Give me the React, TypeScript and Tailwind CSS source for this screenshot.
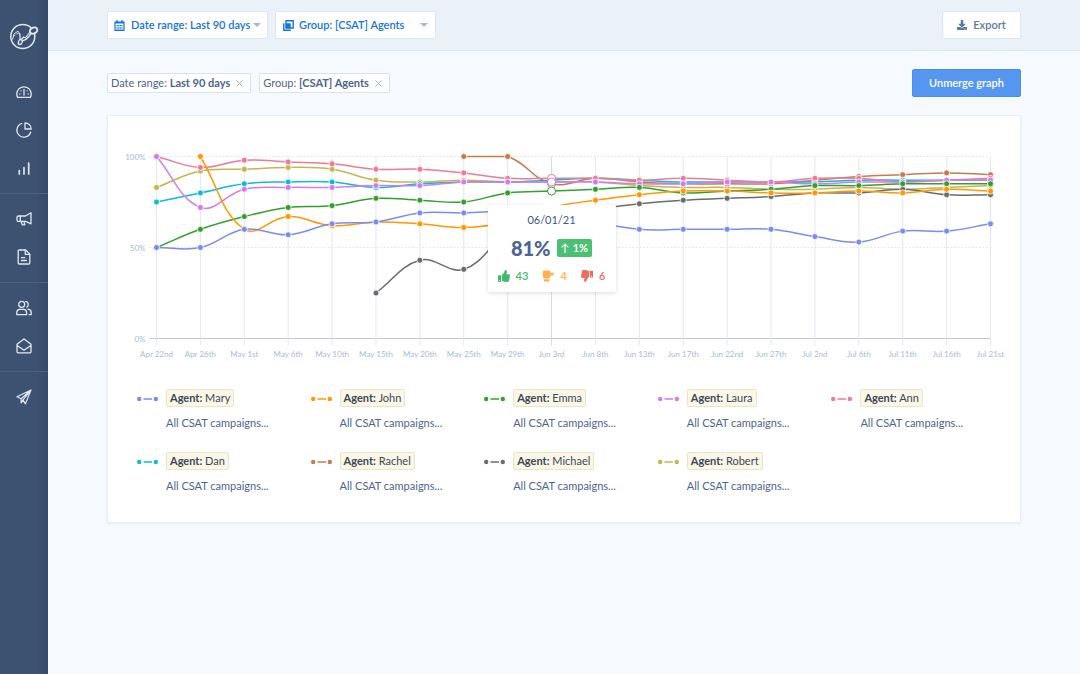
import { ReactNode } from "react";
import { FaDownload, FaThumbsDown, FaThumbsUp } from "react-icons/fa";

interface Series {
    name: string;
    color: string;
    start: number;
    values: number[];
}

const series: Series[] = [
    { name: "Mary", color: "#7b8bee", start: 0, values: [50, 50, 60, 57, 63, 64, 69, 69, 70, 69, 64, 60, 60, 60, 60, 56, 53, 59, 59, 63] },
    { name: "John", color: "#ff9800", start: 1, values: [100, 60, 67, 62, 64, 63, 61, 64, 72, 76, 79, 81, 81, 80, 80, 81, 80, 82, 81] },
    { name: "Emma", color: "#33a02c", start: 0, values: [50, 60, 67, 72, 73, 77, 76, 75, 80, 81, 82, 83, 80, 81, 82, 84, 84, 85, 85, 85] },
    { name: "Laura", color: "#d27bee", start: 0, values: [100, 72, 82, 83, 83, 84, 84, 86, 86, 86, 86, 85, 85, 86, 86, 85, 86, 86, 87, 87] },
    { name: "Ann", color: "#ee7b95", start: 0, values: [100, 94, 98, 97, 96, 93, 93, 91, 88, 88, 88, 87, 88, 87, 86, 88, 88, 86, 87, 88] },
    { name: "Dan", color: "#0bbcd6", start: 0, values: [75, 80, 85, 86, 86, 83, 85, 86, 86, 87, 88, 87, 86, 86, 86, 86, 87, 87, 87, 87] },
    { name: "Rachel", color: "#c57b50", start: 7, values: [100, 100, 85, 88, 86, 85, 85, 85, 87, 89, 90, 91, 90] },
    { name: "Michael", color: "#696c70", start: 5, values: [25, 43, 38, 58, 68, 71, 74, 76, 77, 78, 80, 80, 82, 79, 79] },
    { name: "Robert", color: "#c5b550", start: 0, values: [83, 92, 93, 94, 93, 87, 86, 87, 86, 86, 86, 84, 83, 83, 82, 82, 83, 82, 83, 84] },
];

const dates = [
    "Apr 22nd", "Apr 26th", "May 1st", "May 6th", "May 10th", "May 15th", "May 20th",
    "May 25th", "May 29th", "Jun 3rd", "Jun 8th", "Jun 13th", "Jun 17th", "Jun 22nd",
    "Jun 27th", "Jul 2nd", "Jul 6th", "Jul 11th", "Jul 16th", "Jul 21st",
];

const ACTIVE = 9;
const LEFT = 48.5;
const RIGHT = 882.5;
const TOP = 40.5;
const BOTTOM = 222.5;

const xAt = (i: number) => LEFT + ((RIGHT - LEFT) * i) / (dates.length - 1);
const yAt = (v: number) => BOTTOM - ((BOTTOM - TOP) * v) / 100;
const clampY = (y: number) => Math.min(BOTTOM, Math.max(TOP, y));

const curve = (s: Series) => {
    const pts = s.values.map((v, i) => ({ x: xAt(i + s.start), y: yAt(v) }));
    const controls = pts.map((p, i) => {
        const prev = pts[i - 1] || p;
        const next = pts[i + 1] || p;
        const before = Math.hypot(p.x - prev.x, p.y - prev.y);
        const after = Math.hypot(next.x - p.x, next.y - p.y);
        const a = (0.4 * before) / (before + after);
        const b = (0.4 * after) / (before + after);
        return {
            inX: p.x - a * (next.x - prev.x),
            inY: clampY(p.y - a * (next.y - prev.y)),
            outX: p.x + b * (next.x - prev.x),
            outY: clampY(p.y + b * (next.y - prev.y)),
        };
    });
    return pts
        .map((p, i) => {
            if (i === 0) return `M${p.x} ${p.y}`;
            const from = controls[i - 1];
            const to = controls[i];
            return `C${from.outX} ${from.outY} ${to.inX} ${to.inY} ${p.x} ${p.y}`;
        })
        .join("");
};

const Icon = ({ children }: { children: ReactNode }) => (
    <svg
        viewBox="0 0 16 16"
        className="w-4 h-4"
        fill="none"
        stroke="currentColor"
        strokeWidth="1.3"
        strokeLinecap="round"
        strokeLinejoin="round"
    >
        {children}
    </svg>
);

const navGroups = [
    [
        {
            label: "Dashboard",
            icon: <><path d="M1.600 13.400C1 12.300.8 11.100.8 9.800a7.200 7 0 0 1 14.400 0c0 1.300-.2 2.500-.8 3.600z" /><path d="M8 11V5.500M3.800 10h.1M12.100 10h.1M5 6.800h.1M11 6.800h.1" /></>,
        },
        {
            label: "Segments",
            icon: <><path d="M5.800 1.500A7 7 0 1 0 14.600 10.200" /><path d="M9 .8v6.200h6.200A6.200 6.200 0 0 0 9 .8z" /></>,
        },
        {
            label: "Reports",
            icon: <path d="M3.300 14v-3.500M8 14V7.500M12.700 14V3" strokeWidth="1.7" />,
        },
    ],
    [
        {
            label: "Campaigns",
            icon: <><path d="M15 1.800v11L9.500 10.400H2.300a1.300 1.300 0 0 1-1.300-1.300V6.300A1.300 1.300 0 0 1 2.300 5h7.200z" /><path d="M4.300 5v5.400M5 10.600l1.300 3.200h2.500L8 10.600" /></>,
        },
        {
            label: "Documents",
            icon: <><path d="M9.700 1H3.300A1.100 1.100 0 0 0 2.200 2.100v11.800A1.100 1.100 0 0 0 3.300 15h9.400a1.100 1.100 0 0 0 1.100-1.100V5.100z" /><path d="M9.300 1.200v4.200h4.300M5.500 8.700h3.300M5.500 11.500h5" /></>,
        },
    ],
    [
        {
            label: "Customers",
            icon: <><circle cx="5.700" cy="4.300" r="3" /><path d="M.8 14.700v-2.200C.8 10.300 2.300 9.300 3.800 9.300h3.800c1.500 0 3 1 3 3.200v2.200z" /><path d="M9.800 1.500a3 3 0 0 1 1 5.600M12 9.200c2 .2 3.200 1.400 3.200 3.400v2.100h-2" /></>,
        },
        {
            label: "Inbox",
            icon: <path d="M1 6.200 8 .9l7 5.300v7.600a1.100 1.100 0 0 1-1.100 1.100H2.100A1.100 1.100 0 0 1 1 13.800zM1.200 7.500 8 12.200l6.800-4.700" />,
        },
    ],
    [
        {
            label: "Send",
            icon: <path d="M15 1 .9 7.800l4.200 2zM15 1 9.400 14.900 7 10.900zM5.100 9.800v4l1.900-2.900" strokeWidth="1.200" />,
        },
    ],
];

const Sidebar = () => (
    <aside className="w-12 shrink-0 bg-linear-to-r from-[#3d5271] from-75% to-[#364a69] text-[#dfe8f3]">
        <a href="#" aria-label="Home" className="flex h-[67px] items-center justify-center pt-1">
            <svg viewBox="0 0 30 30" className="w-[30px] h-[30px]" fill="none" stroke="currentColor" strokeLinejoin="round">
                <circle cx="13.800" cy="15.500" r="12" strokeWidth="1.500" />
                <path d="M3.500 18.500 5 13l4-2.800 2 3.300" strokeWidth="1" />
                <path d="M4.500 15.500l1.800-1.500M7.500 13l2-.5" strokeWidth=".9" />
                <path d="M10.500 12.500c1 1.500.2 4 .7 6M13 20c3-.5 4.500-1.500 6-3.500l3.500-4.500M12.600 18.200l2-2.200 2.500 1" strokeWidth="1.300" />
                <path d="m17 16 4-5" strokeWidth="1.200" />
                <ellipse cx="24.600" cy="9.500" rx="3.900" ry="2.900" transform="rotate(-25 24.600 9.500)" fill="#3d5271" strokeWidth="1.900" />
                <ellipse cx="11.300" cy="21" rx="1.800" ry="2.600" transform="rotate(20 11.300 21)" fill="#3d5271" strokeWidth="1.400" />
            </svg>
        </a>
        <nav>
            {navGroups.map((group, i) => (
                <div key={i} className="py-1.5 border-b border-[#4a617f] last:border-0">
                    {group.map((item) => (
                        <a key={item.label} href="#" aria-label={item.label} className="flex h-[38px] items-center justify-center">
                            <Icon>{item.icon}</Icon>
                        </a>
                    ))}
                </div>
            ))}
        </nav>
    </aside>
);

const Caret = () => <span className="border-x-4 border-t-4 border-x-transparent border-t-[#a9b8d0]" />;

const Topbar = () => (
    <header className="flex items-center justify-between h-[51px] px-[59px] border-b border-[#dfe7f0] bg-[#eaf1f9]">
        <div className="flex gap-[7px]">
            <button className="flex items-center justify-between w-[161px] h-7 px-1.5 bg-white border rounded-xs border-[#dde6f1] text-[#1473dc] font-semibold whitespace-nowrap">
                <span className="flex items-center gap-1.5">
                    <svg viewBox="0 0 11 11" className="w-[11px] h-[11px]" fill="none" stroke="currentColor">
                        <path d="M1 2h9v8.300H1z" strokeWidth="1.200" />
                        <path d="M1 2.700h9M3 .3v2M8 .3v2" strokeWidth="1.600" />
                        <path d="M2.500 5.500h6M2.500 7.200h6M2.500 8.900h6" strokeDasharray="1.200 .4" />
                    </svg>
                    Date range: Last 90 days
                </span>
                <Caret />
            </button>
            <button className="flex items-center justify-between w-[161px] h-7 px-[7px] bg-white border rounded-xs border-[#dde6f1] text-[#1473dc] font-semibold whitespace-nowrap">
                <span className="flex items-center gap-[5px]">
                    <svg viewBox="0 0 11 11" className="w-[11px] h-[11px]" fill="none" stroke="currentColor" strokeWidth="1.400">
                        <path d="M3 .8h7.200V8H3z" />
                        <path d="M.8 3.300v6.900h7" />
                        <path d="M3.500 4h3.500v3.500H3.500z" fill="currentColor" />
                    </svg>
                    Group: [CSAT] Agents
                </span>
                <Caret />
            </button>
        </div>
        <button className="flex items-center justify-center gap-1.5 w-[79px] h-7 bg-white border rounded-xs border-[#dde6f1] text-[#5f779f] font-semibold">
            <FaDownload className="w-2.5 h-2.5" />
            Export
        </button>
    </header>
);

const FilterTag = ({ label, value }: { label: string; value: string }) => (
    <span className="flex items-center h-5 px-[3px] bg-white border rounded-xs border-[#d8e2ee] text-[#4c6491]">
        <span>{label}: <b>{value}</b></span>
        <button aria-label={`Remove ${label}`} className="px-1 ml-0.5 text-[#9fb0c9]">
            <svg viewBox="0 0 7 7" className="w-[7px] h-[7px]" stroke="currentColor">
                <path d="m.5.5 6 6m0-6-6 6" />
            </svg>
        </button>
    </span>
);

const Tooltip = () => (
    <div className="absolute top-[89px] left-[48.63%] -translate-x-1/2 w-[128px] h-[87px] pt-[7px] rounded-xs bg-white shadow-[0_1px_4px_rgba(60,80,120,0.2)]">
        <span className="absolute w-3 h-3 rotate-45 bg-white -top-1.5 left-[58px]" />
        <p className="relative leading-4 text-center text-[#3f5888]">06/01/21</p>
        <div className="flex items-center justify-center gap-1.5 mt-2">
            <span className="text-xl leading-6 font-black text-[#4b6594]">81%</span>
            <span className="flex items-center gap-1 h-[18px] px-1 rounded-xs bg-[#4bbf73] text-white font-bold">
                <svg viewBox="0 0 8 10" className="w-2 h-2.5" fill="none" stroke="currentColor" strokeWidth="1.200">
                    <path d="M4 10V1M.6 4.400 4 1l3.400 3.400" />
                </svg>
                1%
            </span>
        </div>
        <div className="flex items-center justify-between px-2.5 mt-2 font-semibold leading-4">
            <span className="flex items-center gap-1.5 text-[#43b96d]"><FaThumbsUp className="w-3 h-3" />43</span>
            <span className="flex items-center gap-1.5 text-[#fdb04b]">
                <svg viewBox="0 0 12 12" className="w-3 h-3" fill="currentColor">
                    <path d="M2 .5h4.800c.9 0 1.500.6 1.500 1.400 0 .3 0 .5-.2.800h2.300a1.400 1.400 0 0 1 0 2.800H8.400c.1.600 0 1-.4 1.300.1 1-.4 1.700-1.300 1.700H3.200C2 8.500.8 7.500.8 6.200V1.900C.8 1.100 1.300.5 2 .5z" />
                    <path d="M2 9.200h5.400v2.300H2z" />
                </svg>
                4
            </span>
            <span className="flex items-center gap-1.5 text-[#ee6b63]"><FaThumbsDown className="w-3 h-3 -scale-x-100" />6</span>
        </div>
    </div>
);

const Chart = () => (
    <div className="relative">
        <svg viewBox="0 0 912 252" className="w-full" fill="none" role="img" aria-label="CSAT score by agent">
            {[100, 50].map((v) => (
                <path key={v} d={`M${LEFT - 7} ${yAt(v)}H${RIGHT}`} stroke="#dfe3ea" strokeDasharray="1.500 2" />
            ))}
            <path d={`M${LEFT - 7} ${BOTTOM}H${RIGHT}`} stroke="#c3c7d0" />
            {dates.map((date, i) => (
                <path key={date} d={`M${xAt(i)} ${TOP}V${BOTTOM + 7}`} stroke={i === ACTIVE ? "#d8dae0" : "#e4e7f0"} />
            ))}
            {[100, 50, 0].map((v) => (
                <text key={v} x={LEFT - 11} y={yAt(v) + 3} textAnchor="end" fontSize="8" fill="#a9b9d3">{v}%</text>
            ))}
            {dates.map((date, i) => (
                <text key={date} x={xAt(i)} y="241" textAnchor="middle" fontSize="8" fill="#a9b9d3">{date}</text>
            ))}
            {[...series].reverse().map((s) => (
                <g key={s.name}>
                    <path d={curve(s)} stroke={s.color} strokeWidth="1.500" />
                    {s.values.map((v, i) =>
                        i + s.start === ACTIVE ? (
                            <circle key={i} cx={xAt(ACTIVE)} cy={yAt(v)} r="4" fill="#fff" stroke={s.color} />
                        ) : (
                            <circle key={i} cx={xAt(i + s.start)} cy={yAt(v)} r="3" fill={s.color} stroke="#fff" strokeWidth="0.800" />
                        )
                    )}
                </g>
            ))}
        </svg>
        <Tooltip />
    </div>
);

const LegendItem = ({ name, color }: { name: string; color: string }) => (
    <div className="flex gap-2">
        <svg viewBox="0 0 21 18" className="w-[21px] h-[18px] shrink-0" stroke={color} fill={color}>
            <circle cx="2.200" cy="10" r="2.200" stroke="none" />
            <path d="M6.500 10h8.500" strokeWidth="1.500" />
            <circle cx="18.800" cy="10" r="2.200" stroke="none" />
        </svg>
        <div>
            <span className="flex items-center w-fit h-[18px] px-[3px] border rounded-xs border-[#ebe5c8] bg-[#faf7e9] text-[#3d4654]">
                <span><b>Agent:</b> {name}</span>
            </span>
            <a href="#" className="block mt-2 leading-4 text-[#4c6491]">All CSAT campaigns...</a>
        </div>
    </div>
);

const App = () => {
    return (
        <div className="flex min-h-screen bg-[#f6f9fe] font-['Lato',sans-serif] text-[11px]">
            <Sidebar />
            <div className="flex-1 min-w-0">
                <Topbar />
                <main className="px-[59px] pt-[18px]">
                    <div className="flex items-center justify-between">
                        <div className="flex gap-2">
                            <FilterTag label="Date range" value="Last 90 days" />
                            <FilterTag label="Group" value="[CSAT] Agents" />
                        </div>
                        <button className="w-[109px] h-7 rounded-xs border border-[#4a8ee8] bg-[#5596f0] text-white font-semibold">
                            Unmerge graph
                        </button>
                    </div>
                    <section className="pb-7 mt-[18px] bg-white border border-[#e8eef5] shadow-[0_1px_2px_rgba(60,80,120,0.08)]">
                        <Chart />
                        <div className="grid grid-cols-5 gap-y-[21px] pl-[29px] pr-[15px] mt-[21px]">
                            {series.map((s) => (
                                <LegendItem key={s.name} name={s.name} color={s.color} />
                            ))}
                        </div>
                    </section>
                </main>
            </div>
        </div>
    );
};

export default App;
